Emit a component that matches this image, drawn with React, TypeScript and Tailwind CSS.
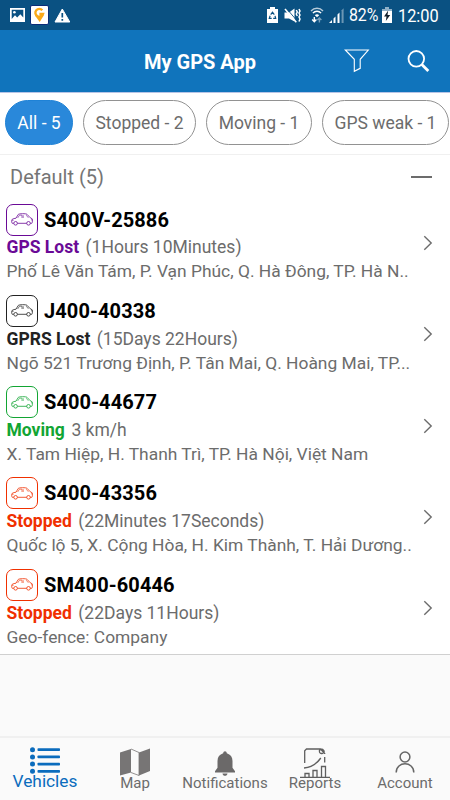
import React from 'react';
import clsx from 'clsx';

interface Vehicle {
  plate: string;
  status: string;
  detail: string;
  address: string;
  color: string;
}

const filters = [
  { label: 'All - 5', active: true, width: 'w-[68px]' },
  { label: 'Stopped - 2', active: false, width: 'w-[113px]' },
  { label: 'Moving - 1', active: false, width: 'w-[106px]' },
  { label: 'GPS weak - 1', active: false, width: 'w-[127px]' },
];

const vehicles: Vehicle[] = [
  {
    plate: 'S400V-25886',
    status: 'GPS Lost',
    detail: '(1Hours 10Minutes)',
    address: 'Phố Lê Văn Tám, P. Vạn Phúc, Q. Hà Đông, TP. Hà N..',
    color: 'text-[#6a0a96]',
  },
  {
    plate: 'J400-40338',
    status: 'GPRS Lost',
    detail: '(15Days 22Hours)',
    address: 'Ngõ 521 Trương Định, P. Tân Mai, Q. Hoàng Mai, TP...',
    color: 'text-[#222222]',
  },
  {
    plate: 'S400-44677',
    status: 'Moving',
    detail: '3 km/h',
    address: 'X. Tam Hiệp, H. Thanh Trì, TP. Hà Nội, Việt Nam',
    color: 'text-[#12a533]',
  },
  {
    plate: 'S400-43356',
    status: 'Stopped',
    detail: '(22Minutes 17Seconds)',
    address: 'Quốc lộ 5, X. Cộng Hòa, H. Kim Thành, T. Hải Dương..',
    color: 'text-[#f03000]',
  },
  {
    plate: 'SM400-60446',
    status: 'Stopped',
    detail: '(22Days 11Hours)',
    address: 'Geo-fence: Company',
    color: 'text-[#f03000]',
  },
];

const CarIcon = () => (
  <svg width="22" height="13" viewBox="0 0 22 13" fill="none" stroke="currentColor" strokeWidth="0.8" strokeLinejoin="round">
    <path d="M2.7 10.3H1.2C.5 9.4.5 7 1.2 6.3 2.2 5.6 3.6 5.4 5 5.2L7.2 1.5C8 .5 15 .4 16 1.3L19.2 4.7 21.2 5.8C21.5 7 21.6 9.5 20.8 10.3H19.3M6.5 10.3H15.7" />
    <path d="M6.6 5 8.5 2.2H11V5M12.2 5V2.2M15.2 2.2 17.4 4.8M1 7.3H2.6M20 6.8H21.4" strokeWidth="0.6" />
    <circle cx="4.6" cy="10.3" r="1.8" />
    <circle cx="17.5" cy="10.3" r="1.8" />
  </svg>
);

const StatusBar = () => (
  <div className="flex h-[30px] shrink-0 items-center bg-[#0a5182] pr-[11px] pl-[10px] text-white">
    <svg width="15" height="14" viewBox="0 0 15 14">
      <path fill="#fff" fillRule="evenodd" d="M0 0H15V14H0ZM1.7 1.7V11L5 7.2 7.2 9.6 10.3 6.2 13.3 9.6V1.7Z" />
      <circle cx="4.4" cy="4.3" r="1.3" fill="#fff" />
    </svg>
    <svg className="ml-[5px]" width="19" height="20" viewBox="0 0 19 20">
      <rect x="0.5" y="0.5" width="18" height="19" rx="1.5" fill="#fff" stroke="#0b2c79" />
      <path d="M12.3 5.3A3.9 3.9 0 1 0 13 9H9.4" fill="none" stroke="#fba919" strokeWidth="2.4" />
      <path d="M5 10.5 9.7 17 14.2 9.8 11 11.7 7.6 11.5Z" fill="#fba919" />
    </svg>
    <svg className="ml-[5px]" width="17" height="15" viewBox="0 0 17 15">
      <path d="M8.3 1 15.8 14H1Z" fill="#fff" stroke="#fff" strokeLinejoin="round" />
      <path d="M8.3 5V9.5M8.3 11V12.8" stroke="#0a5182" strokeWidth="1.7" />
    </svg>

    <div className="ml-auto flex items-center">
      <svg width="11" height="16" viewBox="0 0 11 16">
        <path d="M3 0H8V2H11V16H0V2H3Z" fill="#fff" />
        <path d="M3.7 7.7 5.5 5.2 7.3 7.7M8 8.8 8.7 11.4H6.2M4.7 11.4H2.3L3.1 8.8" fill="none" stroke="#0a5182" strokeWidth="1.2" />
      </svg>
      <svg className="ml-[6px]" width="17" height="17" viewBox="0 0 17 17">
        <path d="M0.5 5.5H5L10.5 1.5V14.5L5 11.5H0.5Z" fill="#fff" />
        <path d="M2.6 1.5 13.4 14.3" stroke="#0a5182" strokeWidth="0.9" />
        <path d="M1 2 12.3 15.3" stroke="#fff" strokeWidth="1.6" />
        <path d="M12.3 3 13.3 5 12.3 7 13.3 9M15 2 16 4 15 6 16 8 15 10 16 12 15 14.5" fill="none" stroke="#fff" strokeWidth="1.5" />
      </svg>
      <svg className="ml-[9px]" width="14" height="16" viewBox="0 0 14 16" fill="none" stroke="#fff" strokeWidth="1.4">
        <path d="M1 4C4.3.4 9.7.4 13 4" opacity="0.7" />
        <path d="M2.9 6.1C5 3.7 9 3.7 11.1 6.1" />
        <path d="M4.8 8.2C6 6.8 8 6.8 9.2 8.2L7 10.2Z" fill="#fff" stroke="none" />
        <path d="M4.3 10V14.5M2.2 12.6 4.3 14.8 6.4 12.6" />
        <path d="M9.4 15.5V11.5M7.4 13 9.4 11 11.4 13" opacity="0.45" />
      </svg>
      <svg className="ml-[5px]" width="15" height="15" viewBox="0 0 15 15" fill="#fff">
        <path d="M0 15 3 12V15Z" />
        <path d="M4.5 10.5 6.5 8.5V15H4.5ZM8.5 6.5 10.5 4.5V15H8.5Z" />
        <path d="M12.6 2.2 14.6.2V15H12.6Z" opacity="0.4" />
      </svg>
      <span className="ml-[5px] inline-block w-[31px] origin-left scale-x-[0.86] pt-[1px] text-[18.5px] leading-none tracking-[-0.1px]">82%</span>
      <svg className="ml-[2px]" width="10" height="16" viewBox="0 0 10 16">
        <path d="M3 0H7V2H10V16H0V2H3Z" fill="#fff" />
        <path d="M0 2H3V0H7V2H10V4H0Z" fill="#8fb0c8" />
        <path d="M6.2 3.5 2 9.5H4.5L3.8 14 8.2 8H5.5Z" fill="#12202c" />
      </svg>
      <span className="ml-[6px] inline-block w-[41px] origin-left scale-x-[0.86] text-[19px] leading-none">12:00</span>
    </div>
  </div>
);

const Header = () => (
  <header className="flex h-[63px] shrink-0 items-center border-b border-[#b7c4e6] bg-[#1074bc] pr-[20px] pl-[144px] text-white">
    <h1 className="pt-[2px] text-[20px] leading-none font-bold whitespace-nowrap">My GPS App</h1>
    <div className="ml-auto flex items-center">
      <svg width="26" height="24" viewBox="0 0 26 24" fill="none" stroke="#fff" strokeWidth="1.1">
        <path d="M1.3 1H24.3L16.2 10.3V19.3L10.3 22.3V10.3Z" />
      </svg>
      <svg className="ml-[37px]" width="23" height="23" viewBox="0 0 23 23" fill="none" stroke="#fff">
        <circle cx="9.3" cy="8.8" r="7.8" strokeWidth="1.8" />
        <path d="M14.6 14.3 21.3 21" strokeWidth="2.8" />
      </svg>
    </div>
  </header>
);

const VehicleRow = ({ vehicle }: { vehicle: Vehicle }) => (
  <div className="flex h-[91.3px] items-start pt-[5.5px] pr-[17px] pl-[6px]">
    <div className="min-w-0 flex-1">
      <div className="flex h-[32px] items-center">
        <div className={clsx('flex h-[32px] w-[31.5px] items-center justify-center rounded-[7px] border', vehicle.color)}>
          <CarIcon />
        </div>
        <span className="ml-[6.5px] text-[20px] leading-none font-bold tracking-[0.1px] text-black">{vehicle.plate}</span>
      </div>
      <div className="flex h-[24px] items-center pl-[0.5px] text-[17.5px] whitespace-nowrap">
        <span className={clsx('font-bold', vehicle.color)}>{vehicle.status}</span>
        <span className="ml-[6.5px] text-[#6c6c6c]">{vehicle.detail}</span>
      </div>
      <div className="flex h-[24px] items-center pl-[0.5px] text-[17.4px] whitespace-nowrap text-[#6c6c6c]">
        {vehicle.address}
      </div>
    </div>
    <svg className="mt-[31.5px] shrink-0" width="10" height="16" viewBox="0 0 10 16" fill="none" stroke="#6c6c6c" strokeWidth="1.4">
      <path d="M1.3 1.3 8.2 8 1.3 14.7" />
    </svg>
  </div>
);

const BottomNav = () => (
  <nav className="grid h-[64px] shrink-0 grid-cols-5 border-t-2 border-[#f0f0f0] bg-[#fafafa] text-[15px] leading-none text-[#6c6c6c]">
    <div className="flex flex-col items-center pt-[9px] text-[17.3px] text-[#0b6cbd]">
      <svg width="30" height="27" viewBox="0 0 30 27" fill="currentColor">
        {[2.7, 9.9, 17.1, 24.3].map((y) => (
          <g key={y}>
            <circle cx="2.5" cy={y} r="2.5" />
            <rect x="7.5" y={y - 1.4} width="22.5" height="2.8" rx="0.8" />
          </g>
        ))}
      </svg>
      <span className="mt-[-1px]">Vehicles</span>
    </div>
    <div className="flex flex-col items-center pt-[10px]">
      <svg width="30" height="28" viewBox="0 0 30 28">
        <path d="M0 4.5 11 1V24.5L0 27.5ZM19 4.5 30 .5V23L19 27.5Z" fill="#777575" />
        <path d="M11 1 19 4.5V27.5L11 24.5" fill="none" stroke="#777575" strokeWidth="0.8" />
      </svg>
      <span>Map</span>
    </div>
    <div className="flex flex-col items-center pt-[13px]">
      <svg width="22" height="25" viewBox="0 0 22 25" fill="#6b6969">
        <path d="M9.2 2.3C9.2-.4 12.8-.4 12.8 2.3 16.5 3.4 18.5 6.2 18.5 10V16.8L21 20.2V21.4H1V20.2L3.5 16.8V10C3.5 6.2 5.5 3.4 9.2 2.3ZM8.5 22.4H13.5C13.2 25.6 8.8 25.6 8.5 22.4Z" />
      </svg>
      <span>Notifications</span>
    </div>
    <div className="flex flex-col items-center pt-[10px]">
      <svg width="30" height="30" viewBox="0 0 30 30" fill="none" stroke="#5f5f5f" strokeWidth="1.3">
        <path d="M4.7 15V2.7L6.5 1H20.5L24.7 5.5V6M20.5 1C18 3 19.8 6.2 22.5 5.3 25.6 4.4 24 1 20.5 1M24.7 9V14.5" />
        <path d="M4 20C12 19.5 16.5 16 20.8 10" />
        <path d="M0 29.3H30M5 29V25.5H9V29M13 29V22.5H17V29M21.5 29V18.5H25.5V29" />
      </svg>
      <span className="mt-[-2px]">Reports</span>
    </div>
    <div className="flex flex-col items-center pt-[13px]">
      <svg width="20" height="22" viewBox="0 0 20 22" fill="none" stroke="#666" strokeWidth="1.5">
        <circle cx="10" cy="6" r="4.9" />
        <path d="M1.2 21.5C1.2 9.9 18.8 9.9 18.8 21.5" />
      </svg>
      <span className="mt-[3px]">Account</span>
    </div>
  </nav>
);

export default function App() {
  return (
    <div className="flex h-[800px] w-[450px] flex-col overflow-hidden bg-[#fafafa] font-['Roboto',sans-serif]">
      <StatusBar />
      <Header />

      <div className="flex h-[62px] shrink-0 items-center gap-[10px] overflow-hidden border-b border-[#f0f0f0] bg-white pb-[2px] pl-[5px]">
        {filters.map((f) => (
          <button
            key={f.label}
            className={clsx(
              'flex h-[45px] shrink-0 items-center justify-center rounded-full border pt-[1px] text-[17.5px] whitespace-nowrap',
              f.width,
              f.active ? 'border-[#1f82d6] bg-[#2988da] text-white' : 'border-[#929292] bg-white text-[#6c6c6c]'
            )}
          >
            {f.label}
          </button>
        ))}
      </div>

      <section className="border-b border-[#d0d0d0] bg-white">
        <div className="flex h-[43px] items-center justify-between pr-[18px] pl-[10px]">
          <h2 className="text-[20px] leading-none text-[#757575]">Default (5)</h2>
          <div className="h-[2px] w-[21px] bg-[#6c6c6c]" />
        </div>
        {vehicles.map((v) => (
          <VehicleRow key={v.plate} vehicle={v} />
        ))}
      </section>

      <div className="flex-1" />
      <BottomNav />
    </div>
  );
}
